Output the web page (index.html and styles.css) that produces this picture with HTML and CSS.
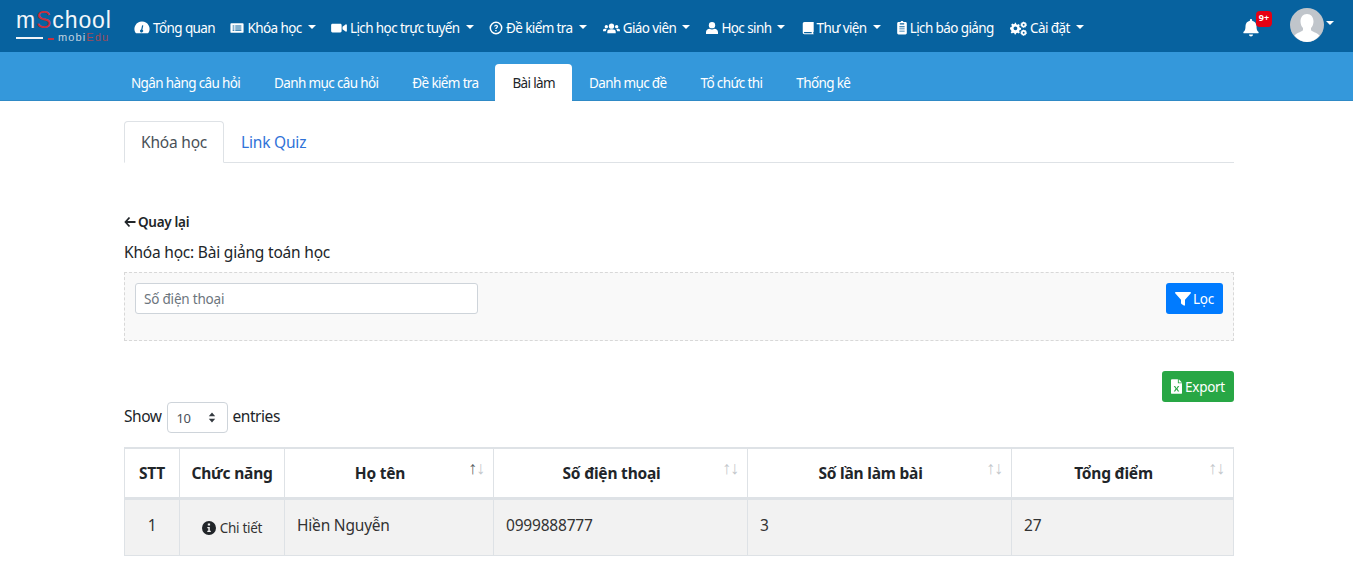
FILE: index.html
```html
<!DOCTYPE html>
<html lang="vi">
<head>
<meta charset="utf-8">
<title>Bài làm</title>
<link rel="stylesheet" href="styles.css">
</head>
<body>
<header class="topbar">
  <a class="logo">
    <span class="logo-main">m<span class="logo-s">S</span>chool</span>
    <span class="logo-sub"><i class="logo-line"></i><i class="logo-dash"></i>mobi<span class="logo-edu">Edu</span></span>
  </a>
  <nav class="mainnav">
    <a class="navitem"><svg class="ic ic-g" viewBox="0 0 16 16"><path fill-rule="evenodd" d="M8 1.5a7.5 7.5 0 0 0-6.5 11.3c.2.3.4.4.7.4h11.6c.3 0 .5-.1.7-.4A7.5 7.5 0 0 0 8 1.5zM9.3 5.5l-.9 4.2a1.5 1.5 0 1 1-1.2-.2l.9-4.200z"/></svg>Tổng quan</a>
    <a class="navitem caret"><svg class="ic" viewBox="0 0 16 16"><path fill-rule="evenodd" d="M1.500 2.500h13c.6 0 1 .4 1 1v9c0 .6-.4 1-1 1h-13c-.6 0-1-.4-1-1v-9c0-.6.4-1 1-1zM3 5v1.300h2V5zm0 2.400v1.300h2V7.400zm0 2.300V11h2V9.700zM6 5v1.300h7V5zm0 2.400v1.300h7V7.400zm0 2.300V11h7V9.700z"/></svg>Khóa học</a>
    <a class="navitem caret"><svg class="ic ic-v" viewBox="0 0 18 16"><path d="M1.500 3h9c.8 0 1.500.7 1.500 1.500v7c0 .8-.7 1.500-1.500 1.500h-9C.7 13 0 12.300 0 11.500v-7C0 3.700.7 3 1.500 3zM13 6.500l3.500-2.600c.6-.4 1.500 0 1.500.8v6.600c0 .8-.9 1.200-1.500.8L13 9.500z"/></svg>Lịch học trực tuyến</a>
    <a class="navitem caret"><svg class="ic" viewBox="0 0 16 16"><circle cx="8" cy="8" r="6.500" fill="none" stroke="currentColor" stroke-width="1.700"/><path d="M5.800 6.300C5.900 5 6.800 4.300 8.100 4.300c1.300 0 2.200.8 2.200 1.900 0 1.700-1.700 1.600-1.700 3H7.200c0-2.100 1.600-2 1.600-3 0-.4-.3-.7-.8-.7-.5 0-.8.3-.9.8zM7.100 10.200h1.600v1.500H7.100z"/></svg>Đề kiểm tra</a>
    <a class="navitem caret"><svg class="ic ic-w" viewBox="0 0 18 16"><circle cx="9" cy="5.500" r="2.800"/><circle cx="3.500" cy="6" r="1.800"/><circle cx="14.500" cy="6" r="1.800"/><path d="M4.500 13v-1.500C4.500 9.500 6 8.800 9 8.800s4.500.7 4.500 2.700V13zM0 11V9.800C0 8.700 1 8.300 2.500 8.300c.6 0 1.200.1 1.600.3-.8.6-1.100 1.400-1.200 2.400zM18 11V9.800c0-1.100-1-1.500-2.500-1.500-.6 0-1.200.1-1.600.3.8.6 1.100 1.400 1.200 2.400z"/></svg>Giáo viên</a>
    <a class="navitem caret"><svg class="ic ic-n" viewBox="0 0 14 16"><circle cx="7" cy="4.700" r="3.700"/><path d="M0 15v-2c0-2.500 2-4 4-4 1 .5 2 .7 3 .7s2-.2 3-.7c2 0 4 1.500 4 4v2z"/></svg>Học sinh</a>
    <a class="navitem caret"><svg class="ic ic-n" viewBox="0 0 13 16"><path fill-rule="evenodd" d="M2.500 1H13v11.500c-.8.3-.8 1.700 0 2V15H2.500C1.200 15 .5 14 .5 13V3C.5 2 1.200 1 2.500 1zM2.500 12.500c-.9 0-.9 1.500 0 1.500h8.300c-.2-.5-.2-1 0-1.500z"/></svg>Thư viện</a>
    <a class="navitem"><svg class="ic ic-s" viewBox="0 0 11 16"><path fill-rule="evenodd" d="M4 1.200a1.500 1.500 0 0 1 3 0h2.500c.8 0 1.500.7 1.500 1.500v11.100c0 .8-.7 1.500-1.500 1.500h-8C.7 15.300 0 14.600 0 13.800V2.700c0-.8.7-1.500 1.500-1.500zM2.500 6v1h6V6zm0 2.500v1h6v-1zm0 2.500v1h6v-1zM3 2.700V4h5V2.700z"/></svg>Lịch báo giảng</a>
    <a class="navitem caret"><svg class="ic ic-w" viewBox="0 0 18 16"><path fill-rule="evenodd" d="M6.500 3.500L8 4l1.200-.8 1.200 1.200-.7 1.300.5 1.300 1.500.4v1.800l-1.500.4-.5 1.300.7 1.300-1.200 1.200-1.200-.8-1.500.5-.5 1.300H5l-.5-1.300-1.300-.5-1.300.8-1.200-1.200.8-1.300-.5-1.300L0 8.700V6.900l1.500-.4.5-1.300-.8-1.300 1.200-1.200 1.300.8 1.300-.5L5 1.800h1.400zM5.700 5.800a2 2 0 1 0 0 4 2 2 0 0 0 0-4z"/><path fill-rule="evenodd" d="M14.500.5l.8.9 1.200-.2.3 1.200 1.100.5-.4 1.100.4 1.100-1.100.5-.3 1.200-1.200-.2-.8.9-.9-.9-1.100.2-.3-1.200-1.100-.5.4-1.100-.4-1.100 1.100-.5.3-1.200 1.100.2zM14.500 3a1 1 0 1 0 0 2 1 1 0 0 0 0-2zM14.500 9l.8.9 1.200-.2.3 1.200 1.100.5-.4 1.100.4 1.100-1.100.5-.3 1.200-1.200-.2-.8.9-.9-.9-1.100.2-.3-1.200-1.100-.5.4-1.100-.4-1.100 1.100-.5.3-1.200 1.100.2zM14.500 11.500a1 1 0 1 0 0 2 1 1 0 0 0 0-2z"/></svg>Cài đặt</a>
  </nav>
  <div class="userbox">
    <div class="bell">
      <svg class="bell-ic" viewBox="0 0 16 18"><path d="M8 0c.7 0 1.100.5 1.100 1.100v.6c2.600.5 4.400 2.700 4.400 5.300 0 4 1 5 2 6 .4.500.2 1.300-.6 1.300H1.100c-.8 0-1-.8-.6-1.300 1-1 2-2 2-6 0-2.600 1.800-4.800 4.400-5.300v-.6C6.900.5 7.300 0 8 0zM6 15.600h4c0 1.200-.9 2-2 2s-2-.8-2-2z"/></svg>
      <span class="badge">9+</span>
    </div>
    <div class="avatar">
      <svg viewBox="0 0 34 34"><circle cx="17" cy="17" r="17" fill="#c0c5cb"/><path fill="#fff" d="M17 6c4 0 6.500 3 6.500 7.500 0 2.500-1 5-2.500 6.500v2c0 1.500 6 2.500 8.500 5.500A17 17 0 0 1 17 34a17 17 0 0 1-12.500-6.500C7 24.500 13 23.500 13 22v-2c-1.500-1.500-2.500-4-2.500-6.500C10.500 9 13 6 17 6z"/></svg>
    </div>
    <i class="avatar-caret"></i>
  </div>
</header>

<nav class="subnav">
  <a class="subitem">Ngân hàng câu hỏi</a>
  <a class="subitem">Danh mục câu hỏi</a>
  <a class="subitem">Đề kiểm tra</a>
  <a class="subitem active">Bài làm</a>
  <a class="subitem">Danh mục đề</a>
  <a class="subitem">Tổ chức thi</a>
  <a class="subitem">Thống kê</a>
</nav>

<main class="container">
  <div class="tabs">
    <a class="tab active">Khóa học</a>
    <a class="tab">Link Quiz</a>
  </div>

  <a class="back"><svg class="back-ic" viewBox="0 0 12 12"><path d="M5.500 1.500L1.500 6l4 4.500M1.500 6H11.500" fill="none" stroke="currentColor" stroke-width="1.800"/></svg>Quay lại</a>
  <p class="course">Khóa học: Bài giảng toán học</p>

  <section class="filter">
    <div class="field">Số điện thoại</div>
    <button class="btn btn-blue"><svg class="btn-ic" viewBox="0 0 16 16"><path d="M.8 1h14.400c.7 0 1 .8.600 1.300L10 8.800V14c0 .6-.7 1-1.200.6l-2.300-1.700c-.3-.2-.5-.5-.5-.8V8.800L.2 2.300C-.2 1.800.1 1 .8 1z"/></svg>Lọc</button>
  </section>

  <div class="export-row">
    <button class="btn btn-green"><svg class="btn-ic-x" viewBox="0 0 12 16"><path fill-rule="evenodd" d="M1 0h6.500v4.500H12V15c0 .6-.4 1-1 1H1c-.6 0-1-.4-1-1V1c0-.6.4-1 1-1zM8.500 0L12 3.500H8.500zM3 7.500l2 3-2 3h1.500L6 11.200l1.500 2.300H9l-2-3 2-3H7.500L6 9.800 4.500 7.500z"/></svg>Export</button>
  </div>

  <div class="length">Show
    <span class="select">10<svg class="select-ic" viewBox="0 0 8 12"><path d="M4 .5L7.500 4.700H.5zM4 11.500L.5 7.300h7z"/></svg></span>
    entries</div>

  <table class="data">
    <thead>
      <tr>
        <th class="c-stt">STT</th>
        <th class="c-act">Chức năng</th>
        <th class="c-name sort sort-asc">Họ tên</th>
        <th class="c-phone sort">Số điện thoại</th>
        <th class="c-times sort">Số lần làm bài</th>
        <th class="sort">Tổng điểm</th>
      </tr>
    </thead>
    <tbody>
      <tr>
        <td class="center">1</td>
        <td class="center detail"><svg class="info-ic" viewBox="0 0 14 14"><path fill-rule="evenodd" d="M7 0a7 7 0 1 1 0 14A7 7 0 0 1 7 0zM5.800 2.500v2h2.300v-2zM5.300 6v1.200h1v2.600h-1V11h3.500V9.800h-1V6z"/></svg>Chi tiết</td>
        <td>Hiền Nguyễn</td>
        <td>0999888777</td>
        <td>3</td>
        <td>27</td>
      </tr>
    </tbody>
  </table>
</main>
</body>
</html>
```
FILE: styles.css
```css
* { box-sizing: border-box; }
html, body { margin: 0; padding: 0; }
body {
  font-family: "Noto Sans", "Open Sans", sans-serif;
  font-size: 15px;
  color: #212529;
  background: #fff;
  height: 564px;
  overflow: hidden;
}
a { text-decoration: none; color: inherit; cursor: pointer; }

/* top bar */
.topbar {
  height: 52px;
  background: #07629f;
  display: flex;
  align-items: center;
  color: #fff;
}
.logo {
  width: 134px;
  padding-left: 16px;
  flex: none;
  display: flex;
  flex-direction: column;
  margin-top: 2px;
}
.logo-main {
  font-family: "Liberation Sans", sans-serif;
  font-size: 23px;
  line-height: 20px;
  letter-spacing: .9px;
  color: #f2f6fa;
}
.logo-s { color: #c8303f; }
.logo-sub {
  display: flex;
  align-items: center;
  font-family: "Liberation Sans", sans-serif;
  font-size: 11px;
  line-height: 13px;
  letter-spacing: 1.1px;
  color: #c3d3e0;
  margin-top: 1px;
}
.logo-line { width: 27px; height: 2px; background: #f0f4f8; margin-right: 5px; margin-top: 1px; }
.logo-dash { width: 6px; height: 2px; background: #c8303f; margin-right: 4px; margin-top: 3px; }
.logo-edu { color: #a04a58; }

.mainnav { display: flex; align-items: center; gap: 15.4px; font-size: 13.5px; margin-top: 4px; }
.navitem { display: inline-flex; align-items: center; white-space: nowrap; letter-spacing: -.6px; }
.navitem:nth-child(n+5) { margin-left: .8px; }
.ic { width: 14px; height: 14px; fill: currentColor; margin-right: 3px; flex: none; }
.ic-g { width: 16px; height: 16px; }
.ic-v { width: 16px; height: 14px; }
.ic-w { width: 17px; height: 15px; }
.ic-n { width: 12px; }
.ic-s { width: 10px; }
.caret::after {
  content: "";
  margin-left: 6px;
  border-top: 4px solid #fff;
  border-left: 4px solid transparent;
  border-right: 4px solid transparent;
  margin-top: -3px;
}
.userbox {
  margin-left: auto;
  display: flex;
  align-items: center;
  padding-right: 19px;
}
.bell { position: relative; width: 16px; height: 18px; margin-right: 31px; }
.bell-ic { width: 16px; height: 18px; fill: #fff; display: block; margin-top: 2px; }
.badge {
  position: absolute;
  left: 13px;
  top: -6px;
  width: 16px;
  height: 16px;
  background: #e60012;
  border-radius: 4px;
  font-size: 9px;
  font-weight: 700;
  line-height: 14px;
  text-align: center;
  color: #fff;
}
.avatar { width: 34px; height: 34px; margin-right: 2px; margin-top: -3px; }
.avatar svg { display: block; width: 34px; height: 34px; }
.avatar-caret {
  border-top: 4px solid #fff;
  border-left: 4px solid transparent;
  border-right: 4px solid transparent;
  margin-top: -6px;
}

/* sub nav */
.subnav {
  height: 49px;
  background: #3498db;
  border-bottom: 1px solid #2f8ac6;
  padding: 12px 0 0 114px;
  display: flex;
  color: #fff;
  font-size: 13.5px;
}
.subitem {
  height: 37px;
  line-height: 39px;
  padding: 0 17px;
  white-space: nowrap;
  letter-spacing: -.64px;
  border-radius: 4px 4px 0 0;
}
.subitem.active { background: #fff; color: #212529; }

/* content */
.container { width: 1110px; margin-left: 124px; }
.tabs {
  display: flex;
  margin-top: 20px;
  height: 42px;
  border-bottom: 1px solid #dee2e6;
}
.tab {
  height: 42px;
  padding: 0 16px;
  line-height: 41px;
  font-size: 15.5px;
  color: #2f72d8;
  border: 1px solid transparent;
  letter-spacing: -.2px;
  border-radius: 4px 4px 0 0;
}
.tab.active {
  color: #495057;
  background: #fff;
  border-color: #dee2e6 #dee2e6 #fff;
}
.back {
  display: flex;
  align-items: center;
  margin-top: 49px;
  height: 20px;
  font-size: 13.5px;
  font-weight: 600;
  letter-spacing: -.3px;
}
.back-ic { width: 12px; height: 12px; margin-right: 2px; }
.course {
  margin: 10px 0 0;
  font-size: 15.5px;
  line-height: 20px;
  letter-spacing: -.2px;
}
.filter {
  margin-top: 10px;
  height: 69px;
  background: #f9f9f9;
  border: 1px dashed #d8d8d8;
  padding: 10px;
  display: flex;
  justify-content: space-between;
  align-items: flex-start;
}
.field {
  width: 343px;
  height: 31px;
  background: #fff;
  border: 1px solid #ced4da;
  border-radius: 3px;
  padding: 0 8px;
  font-size: 13.5px;
  line-height: 30px;
  color: #6c757d;
  letter-spacing: -.2px;
}
.btn {
  height: 31px;
  border: 0;
  border-radius: 3px;
  color: #fff;
  font-family: inherit;
  font-size: 13.5px;
  letter-spacing: -.3px;
  display: inline-flex;
  align-items: center;
  justify-content: center;
}
.btn-blue { background: #007bff; width: 57px; }
.btn-green { background: #28a745; width: 72px; }
.btn-ic { width: 16px; height: 16px; fill: #fff; margin-right: 2px; }
.btn-ic-x { width: 11px; height: 15px; fill: #fff; margin-right: 3px; }
.export-row { display: flex; justify-content: flex-end; margin-top: 30px; }
.length {
  display: flex;
  align-items: flex-start;
  gap: 5px;
  height: 31px;
  font-size: 15.5px;
  line-height: 29px;
  letter-spacing: -.45px;
}
.select {
  width: 61px;
  height: 31px;
  border: 1px solid #ced4da;
  border-radius: 4px;
  display: flex;
  align-items: center;
  justify-content: space-between;
  padding: 2px 11px 0 9px;
  font-size: 13px;
  color: #495057;
}
.select-ic { width: 8px; height: 11px; fill: #343a40; margin-top: -2px; }

.data {
  width: 1110px;
  margin-top: 14px;
  border-collapse: collapse;
  table-layout: fixed;
  font-size: 15.5px;
}
.data th, .data td { border: 1px solid #dee2e6; }
.data thead tr { border-top: 2px solid #dee2e6; }
.data th {
  height: 50px;
  border-bottom: 3px solid #dee2e6;
  font-weight: 700;
  font-size: 15.5px;
  letter-spacing: -.2px;
  color: #212529;
  padding: 0 12px;
  position: relative;
}
.c-stt { width: 55px; }
.data th.c-act { width: 105px; padding: 0; }
.c-name { width: 209px; }
.c-phone { width: 254px; }
.c-times { width: 264px; }
.data th.sort { padding: 0 30px 0 12px; }
.sort::before, .sort::after {
  position: absolute;
  top: 9px;
  font-family: "Liberation Sans", sans-serif;
  font-weight: 400;
  font-size: 18px;
  color: #c3c7cb;
}
.sort::before { content: "↑"; right: 16px; }
.sort::after { content: "↓"; right: 8px; }
.sort-asc::before { color: #5a5f64; }
.data td {
  height: 57px;
  background: #f2f2f2;
  padding: 0 12px 4px;
  color: #333;
  letter-spacing: -.2px;
}
.data td.center { text-align: center; padding: 0 0 4px; }
.data td.detail { font-size: 13.5px; letter-spacing: -.3px; padding: 2px 0 0; }
.info-ic { width: 14px; height: 14px; fill: #212529; margin-right: 4px; vertical-align: -2px; }
```
